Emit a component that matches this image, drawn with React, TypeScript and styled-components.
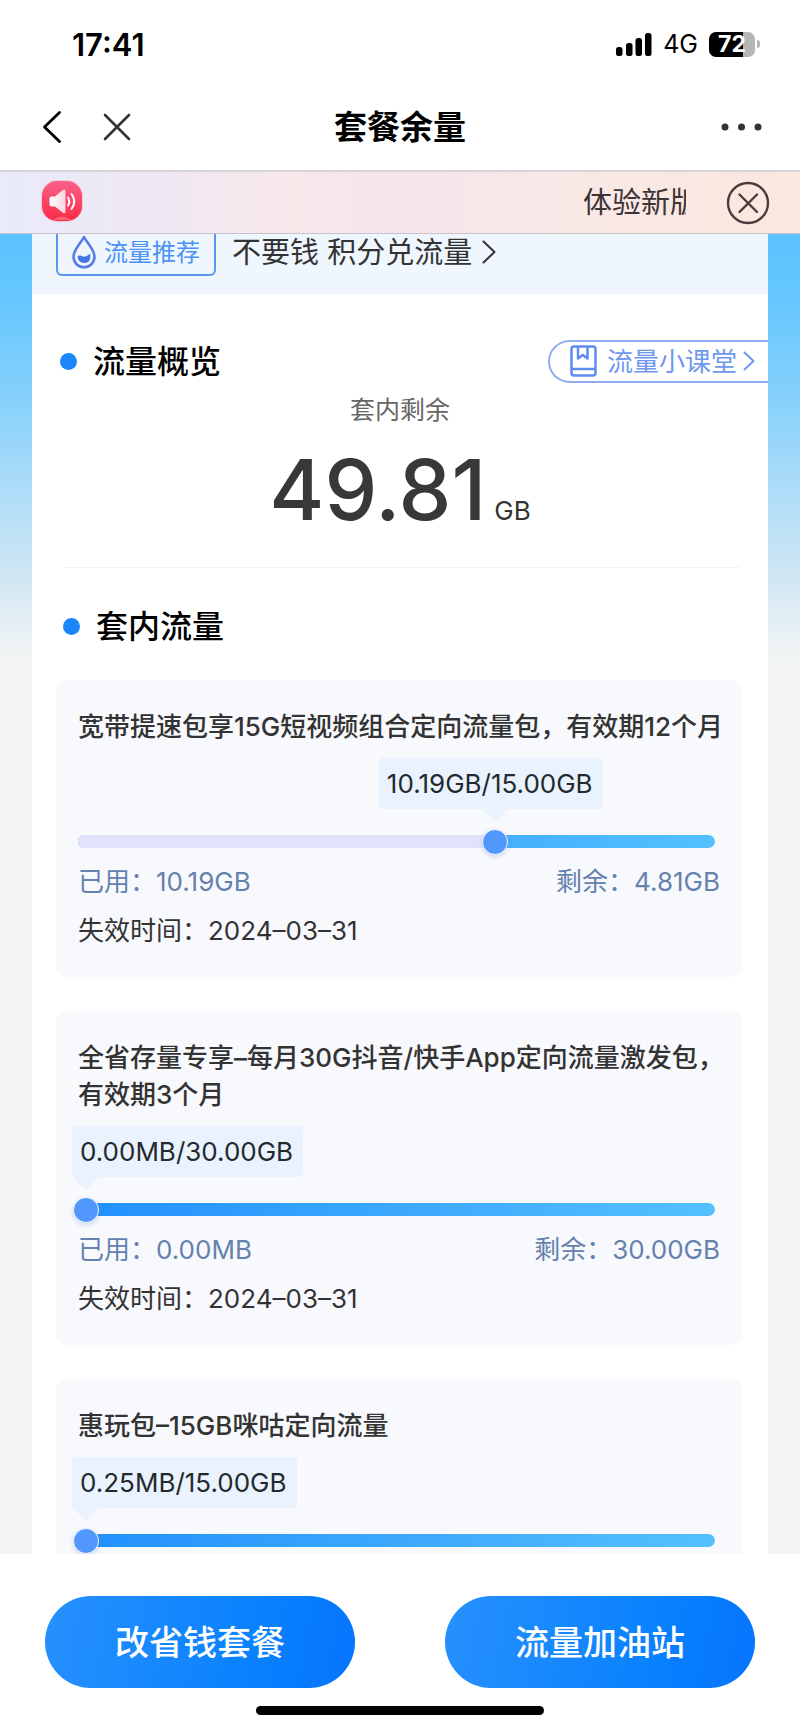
import React from 'react';
import styled, { createGlobalStyle, css } from 'styled-components';

const GlobalStyle = createGlobalStyle`
  *, *::before, *::after { box-sizing: border-box; }
  body {
    margin: 0;
    background: #fff;
    color: #333;
    font-family: Inter, "Noto Sans CJK SC", sans-serif;
    font-size: 26px;
    line-height: 37px;
  }
  h1, h2, h3, p { margin: 0; }
  button { border: 0; padding: 0; background: none; font: inherit; color: inherit; cursor: pointer; }
  a { color: inherit; text-decoration: none; }
  svg { display: block; flex: none; }
`;

const Screen = styled.div`
  display: flex;
  flex-direction: column;
  height: 100vh;
`;

const StatusBar = styled.div`
  display: flex;
  align-items: center;
  justify-content: space-between;
  height: 88px;
  padding: 0 40px 0 72px;
  color: #000;
`;

const Clock = styled.span`
  font-size: 31px;
  font-weight: 600;
`;

const StatusIcons = styled.div`
  display: flex;
  align-items: center;
  gap: 11px;
`;

const Network = styled.span`
  font-size: 25px;
`;

const Battery = styled.div`
  display: flex;
  align-items: center;
  gap: 2px;

  &::after {
    content: '';
    width: 3px;
    height: 8px;
    border-radius: 0 4px 4px 0;
    background: #b4b6b5;
  }
`;

const BatteryLevel = styled.span`
  width: 46px;
  height: 25px;
  border-radius: 7px;
  background: linear-gradient(90deg, #000 73%, #b4b6b5 73%);
  color: #fff;
  font-size: 23px;
  font-weight: 700;
  line-height: 25px;
  text-align: center;
`;

const NavBar = styled.header`
  display: grid;
  grid-template-columns: 1fr auto 1fr;
  align-items: center;
  height: 82px;
  padding: 0 37px 4px;
`;

const NavGroup = styled.div<{ $end?: boolean }>`
  display: flex;
  gap: 34px;
  justify-content: ${(p) => (p.$end ? 'flex-end' : 'flex-start')};
`;

const NavTitle = styled.h1`
  color: #000;
  font-size: 33px;
  font-weight: 600;
`;

const Notice = styled.div`
  display: flex;
  align-items: center;
  height: 64px;
  padding: 0 30px 0 38px;
  border-top: 2px solid #dad5dc;
  border-bottom: 1px solid #c8c3ca;
  background: linear-gradient(90deg, #e9ebfa 0%, #efe8f3 20%, #f7e8ea 36%, #f5e6ec 50%, #f8e8e7 68%, #fbe8de 100%);
`;

const Marquee = styled.p`
  width: 103px;
  margin: 0 40px 0 auto;
  overflow: hidden;
  color: #3d3436;
  font-size: 29px;
  white-space: nowrap;
`;

const Main = styled.main`
  flex: 1;
  min-height: 0;
  overflow: hidden;
  padding: 0 32px;
  background: linear-gradient(
    #5bc2fe 0,
    #66c7fe 66px,
    #86d1fb 166px,
    #abdcf8 250px,
    #cfe6f3 340px,
    #f3f5f5 425px
  );
`;

const Panel = styled.div`
  background: #fff;
`;

const Recommend = styled.div`
  display: flex;
  align-items: flex-end;
  gap: 16px;
  height: 60px;
  padding: 0 24px 18px;
  overflow: hidden;
  background: #eff6fd;
`;

const Chip = styled.span`
  display: flex;
  flex: none;
  align-items: center;
  gap: 8px;
  height: 48px;
  padding: 0 14px;
  border: 2px solid #5598ec;
  border-radius: 6px;
  color: #4a93f3;
  font-size: 24px;
`;

const RecommendLink = styled.a`
  display: flex;
  align-items: center;
  gap: 10px;
  height: 48px;
  font-size: 29px;
`;

const Section = styled.section<{ $overview?: boolean }>`
  padding: ${(p) => (p.$overview ? '46px 0 35px 28px' : '37px 26px 34px 24px')};
`;

const SectionHead = styled.div`
  display: flex;
  align-items: center;
  justify-content: space-between;
  height: 42px;
`;

const SectionTitle = styled.h2<{ $inset?: boolean }>`
  display: flex;
  align-items: center;
  gap: 16px;
  padding-left: ${(p) => (p.$inset ? '7px' : '0')};
  color: #000;
  font-size: 32px;
  font-weight: 500;

  &::before {
    content: '';
    width: 17px;
    height: 17px;
    border-radius: 50%;
    background: #1a86fb;
  }
`;

const LessonLink = styled.a`
  display: flex;
  align-items: center;
  height: 43px;
  padding: 0 13px 0 20px;
  border: 2px solid #93abf0;
  border-right: 0;
  border-radius: 22px 0 0 22px;
  color: #6f97ee;
  white-space: nowrap;

  span { margin: 0 6px 0 10px; }
`;

const Summary = styled.div`
  display: flex;
  flex-direction: column;
  align-items: center;
  padding: 10px 28px 0 0;
  color: #666;
  font-size: 25px;
`;

const Total = styled.p`
  display: flex;
  align-items: baseline;
  gap: 8px;
  margin-top: 19px;
  color: #383838;
  font-size: 84px;
  font-weight: 500;
  line-height: 84px;

  small {
    color: #333;
    font-size: 26px;
    font-weight: 400;
    line-height: 26px;
  }
`;

const Divider = styled.hr`
  height: 1px;
  margin: 0 28px 0 32px;
  border: 0;
  background: #f3f3f3;
`;

const Cards = styled.div`
  display: flex;
  flex-direction: column;
  gap: 34px;
  padding-top: 33px;
`;

const Card = styled.article`
  padding: 28px 16px 28px 22px;
  border-radius: 10px;
  background: #f8f9fd;
`;

const CardTitle = styled.h3`
  font-size: 26px;
  font-weight: 500;
`;

const Usage = styled.div`
  --knob: calc(8px + (100% - 46px) * var(--used));
  margin-top: 13px;
`;

const Bubble = styled.output<{ $centered: boolean }>`
  position: relative;
  display: block;
  width: max-content;
  height: 51px;
  padding: 0 10px 0 8px;
  border-radius: 4px;
  background: #e9f2fd;
  color: #24292e;
  line-height: 51px;

  ${(p) =>
    p.$centered
      ? css`
          margin-left: var(--knob);
          transform: translateX(calc(-50% - 4px));
        `
      : css`
          margin-left: -6px;
        `}

  &::after {
    content: '';
    position: absolute;
    top: 100%;
    left: ${(p) => (p.$centered ? 'calc(50% + 4px)' : '14px')};
    margin-left: -13px;
    border: 13px solid transparent;
    border-top-color: #e9f2fd;
    border-bottom: 0;
  }
`;

const Track = styled.div`
  display: grid;
  grid-template-rows: 13px;
  align-items: center;
  height: 13px;
  margin: 26px 11px 0 0;
  border-radius: 7px;
  background: linear-gradient(90deg, #2290fd, #55c0fd);

  > * { grid-area: 1 / 1; }
`;

const UsedPart = styled.div<{ $visible: boolean }>`
  display: ${(p) => (p.$visible ? 'block' : 'none')};
  width: var(--knob);
  height: 13px;
  border-radius: 6px 0 0 6px;
  background: #e2e3fb;
`;

const Range = styled.input`
  appearance: none;
  width: calc(100% - 9px);
  height: 26px;
  margin: 0 0 0 -5px;
  background: none;

  &::-webkit-slider-thumb {
    appearance: none;
    width: 26px;
    height: 26px;
    border: 1px solid #f3f7ff;
    border-radius: 50%;
    background: #5297fb;
    box-shadow: 0 2px 4px rgba(82, 120, 200, 0.25);
  }
`;

const Amounts = styled.div`
  display: flex;
  justify-content: space-between;
  margin-top: 15px;
  padding-right: 6px;
  color: #6581ad;
`;

const Expiry = styled.p`
  margin-top: 12px;
`;

const Footer = styled.footer`
  display: flex;
  flex-direction: column;
  align-items: center;
  gap: 18px;
  padding: 42px 45px 16px;
`;

const Actions = styled.div`
  display: grid;
  grid-template-columns: 1fr 1fr;
  gap: 90px;
  width: 100%;
`;

const ActionButton = styled.button`
  height: 92px;
  border-radius: 46px;
  background: linear-gradient(100deg, #2790fd, #0a82fe 65%, #0474fd);
  color: #fff;
  font-size: 34px;
  font-weight: 500;
`;

const HomeIndicator = styled.div`
  width: 36vw;
  height: 9px;
  border-radius: 5px;
  background: #000;
`;

const Chevron = ({ width, height }: { width: number; height: number }) => (
  <svg width={width} height={height} viewBox={`0 0 ${width} ${height}`} fill="none" stroke="currentColor" strokeWidth="2" strokeLinecap="round" strokeLinejoin="round">
    <path d={`M1.5 1.5 L${width - 1.5} ${height / 2} L1.5 ${height - 1.5}`} />
  </svg>
);

const SignalIcon = () => (
  <svg width="36" height="23" viewBox="0 0 36 23">
    <rect x="0" y="14" width="6.500" height="9" rx="2.500" />
    <rect x="10" y="10" width="6.500" height="13" rx="2.500" />
    <rect x="19.500" y="5" width="6.500" height="18" rx="2.500" />
    <rect x="29" y="0" width="6.500" height="23" rx="2.500" />
  </svg>
);

const SpeakerIcon = () => (
  <svg width="48" height="48" viewBox="0 2 48 48">
    <defs>
      <linearGradient id="speakerFill" x1="0" y1="0" x2="0" y2="1">
        <stop offset="0" stopColor="#f9608a" />
        <stop offset="0.55" stopColor="#fb4363" />
        <stop offset="1" stopColor="#fb2a44" />
      </linearGradient>
      <linearGradient id="hornFill" x1="0" x2="1">
        <stop offset="0" stopColor="#fff" />
        <stop offset="1" stopColor="#fbd3e2" />
      </linearGradient>
    </defs>
    <rect x="3" y="3" width="42" height="42" rx="16" fill="#fba9b6" opacity="0.5" />
    <rect x="4" y="4" width="40" height="40" rx="15" fill="url(#speakerFill)" />
    <path d="M15 43 q9 -7 18 0 z" fill="#fc7a8a" opacity="0.7" />
    <path d="M13.500 19.500 H17 L24.500 13.200 Q27.500 11.500 27.500 14.500 V34 Q27.500 37.500 24.500 35.500 L17 29.500 H13.500 Q11.500 29.500 11.500 27.500 V21.500 Q11.500 19.500 13.500 19.500 Z" fill="url(#hornFill)" />
    <path d="M30 20.500 Q32.500 24.500 30 28.500 M33.500 17 Q39 24.500 33.500 32" fill="none" stroke="#fff" strokeWidth="2" strokeLinecap="round" />
  </svg>
);

const CircleCloseIcon = () => (
  <svg width="44" height="44" viewBox="0 0 44 44" fill="none" stroke="#4a3b3c" strokeWidth="2.4" strokeLinecap="round">
    <circle cx="22" cy="22" r="20" />
    <path d="M13.500 13.500 L31 31 M31 13.500 L13.500 31" />
  </svg>
);

const DropIcon = () => (
  <svg width="24" height="34" viewBox="0 0 24 34" fill="none">
    <path d="M12 2 C9 8 1.500 14.500 1.500 21.800 A10.500 10.500 0 0 0 22.500 21.800 C22.500 14.500 15 8 12 2 Z" stroke="#5a7bea" strokeWidth="2.600" strokeLinejoin="round" />
    <path d="M5.500 21 Q8 19.800 11 21.600 Q14 22.500 18 18.500 Q19.800 28 12 28 Q6 28 5.500 21 Z" fill="#4377e6" />
  </svg>
);

const BookIcon = () => (
  <svg width="27" height="32" viewBox="0 0 27 32" fill="none" stroke="#5f8bee" strokeWidth="2.500" strokeLinejoin="round">
    <rect x="1.500" y="1.500" width="24" height="29" rx="2.500" />
    <path d="M1.500 24 H25.500 M8 1.500 V13.500 L12.800 10 L17.500 13.500 V1.500" />
  </svg>
);

interface Plan {
  title: string;
  used: string;
  total: string;
  ratio: number;
  left?: string;
  expiry?: string;
}

const plans: Plan[] = [
  {
    title: '宽带提速包享15G短视频组合定向流量包，有效期12个月',
    used: '10.19GB',
    total: '15.00GB',
    ratio: 0.679,
    left: '4.81GB',
    expiry: '2024–03–31',
  },
  {
    title: '全省存量专享–每月30G抖音/快手App定向流量激发包，有效期3个月',
    used: '0.00MB',
    total: '30.00GB',
    ratio: 0,
    left: '30.00GB',
    expiry: '2024–03–31',
  },
  { title: '惠玩包–15GB咪咕定向流量', used: '0.25MB', total: '15.00GB', ratio: 0 },
];

const PlanCard = ({ plan }: { plan: Plan }) => (
  <Card>
    <CardTitle>{plan.title}</CardTitle>
    <Usage style={{ '--used': plan.ratio } as React.CSSProperties}>
      <Bubble $centered={plan.ratio > 0.2}>{`${plan.used}/${plan.total}`}</Bubble>
      <Track>
        <UsedPart $visible={plan.ratio > 0} />
        <Range type="range" min={0} max={1} step={0.001} value={plan.ratio} readOnly aria-label={plan.title} />
      </Track>
    </Usage>
    {plan.left && (
      <Amounts>
        <span>已用：{plan.used}</span>
        <span>剩余：{plan.left}</span>
      </Amounts>
    )}
    {plan.expiry && <Expiry>失效时间：{plan.expiry}</Expiry>}
  </Card>
);

export default function App() {
  return (
    <Screen>
      <GlobalStyle />
      <StatusBar>
        <Clock>17:41</Clock>
        <StatusIcons>
          <SignalIcon />
          <Network>4G</Network>
          <Battery>
            <BatteryLevel>72</BatteryLevel>
          </Battery>
        </StatusIcons>
      </StatusBar>
      <NavBar>
        <NavGroup>
          <button aria-label="返回">
            <svg width="28" height="34" viewBox="0 0 28 34" fill="none" stroke="#000" strokeWidth="2.800" strokeLinecap="round" strokeLinejoin="round">
              <path d="M22.500 2.500 L7.500 17 L22.500 31.500" />
            </svg>
          </button>
          <button aria-label="关闭">
            <svg width="34" height="34" viewBox="0 0 34 34" fill="none" stroke="#333" strokeWidth="2.600" strokeLinecap="round">
              <path d="M6 5 L30 29 M30 5 L6 29" />
            </svg>
          </button>
        </NavGroup>
        <NavTitle>套餐余量</NavTitle>
        <NavGroup $end>
          <button aria-label="更多">
            <svg width="42" height="34" viewBox="0 0 42 34" fill="#333">
              <circle cx="4" cy="17" r="3.500" />
              <circle cx="20.500" cy="17" r="3.500" />
              <circle cx="37" cy="17" r="3.500" />
            </svg>
          </button>
        </NavGroup>
      </NavBar>
      <Notice>
        <SpeakerIcon />
        <Marquee>体验新版</Marquee>
        <button aria-label="关闭通知">
          <CircleCloseIcon />
        </button>
      </Notice>
      <Main>
        <Panel>
          <Recommend>
            <Chip>
              <DropIcon />
              流量推荐
            </Chip>
            <RecommendLink href="#points">
              不要钱 积分兑流量
              <Chevron width={14} height={24} />
            </RecommendLink>
          </Recommend>
          <Section $overview>
            <SectionHead>
              <SectionTitle>流量概览</SectionTitle>
              <LessonLink href="#lessons">
                <BookIcon />
                <span>流量小课堂</span>
                <Chevron width={12} height={20} />
              </LessonLink>
            </SectionHead>
            <Summary>
              <p>套内剩余</p>
              <Total>
                49.81<small>GB</small>
              </Total>
            </Summary>
          </Section>
          <Divider />
          <Section>
            <SectionHead>
              <SectionTitle $inset>套内流量</SectionTitle>
            </SectionHead>
            <Cards>
              {plans.map((plan) => (
                <PlanCard key={plan.title} plan={plan} />
              ))}
            </Cards>
          </Section>
        </Panel>
      </Main>
      <Footer>
        <Actions>
          <ActionButton>改省钱套餐</ActionButton>
          <ActionButton>流量加油站</ActionButton>
        </Actions>
        <HomeIndicator />
      </Footer>
    </Screen>
  );
}
